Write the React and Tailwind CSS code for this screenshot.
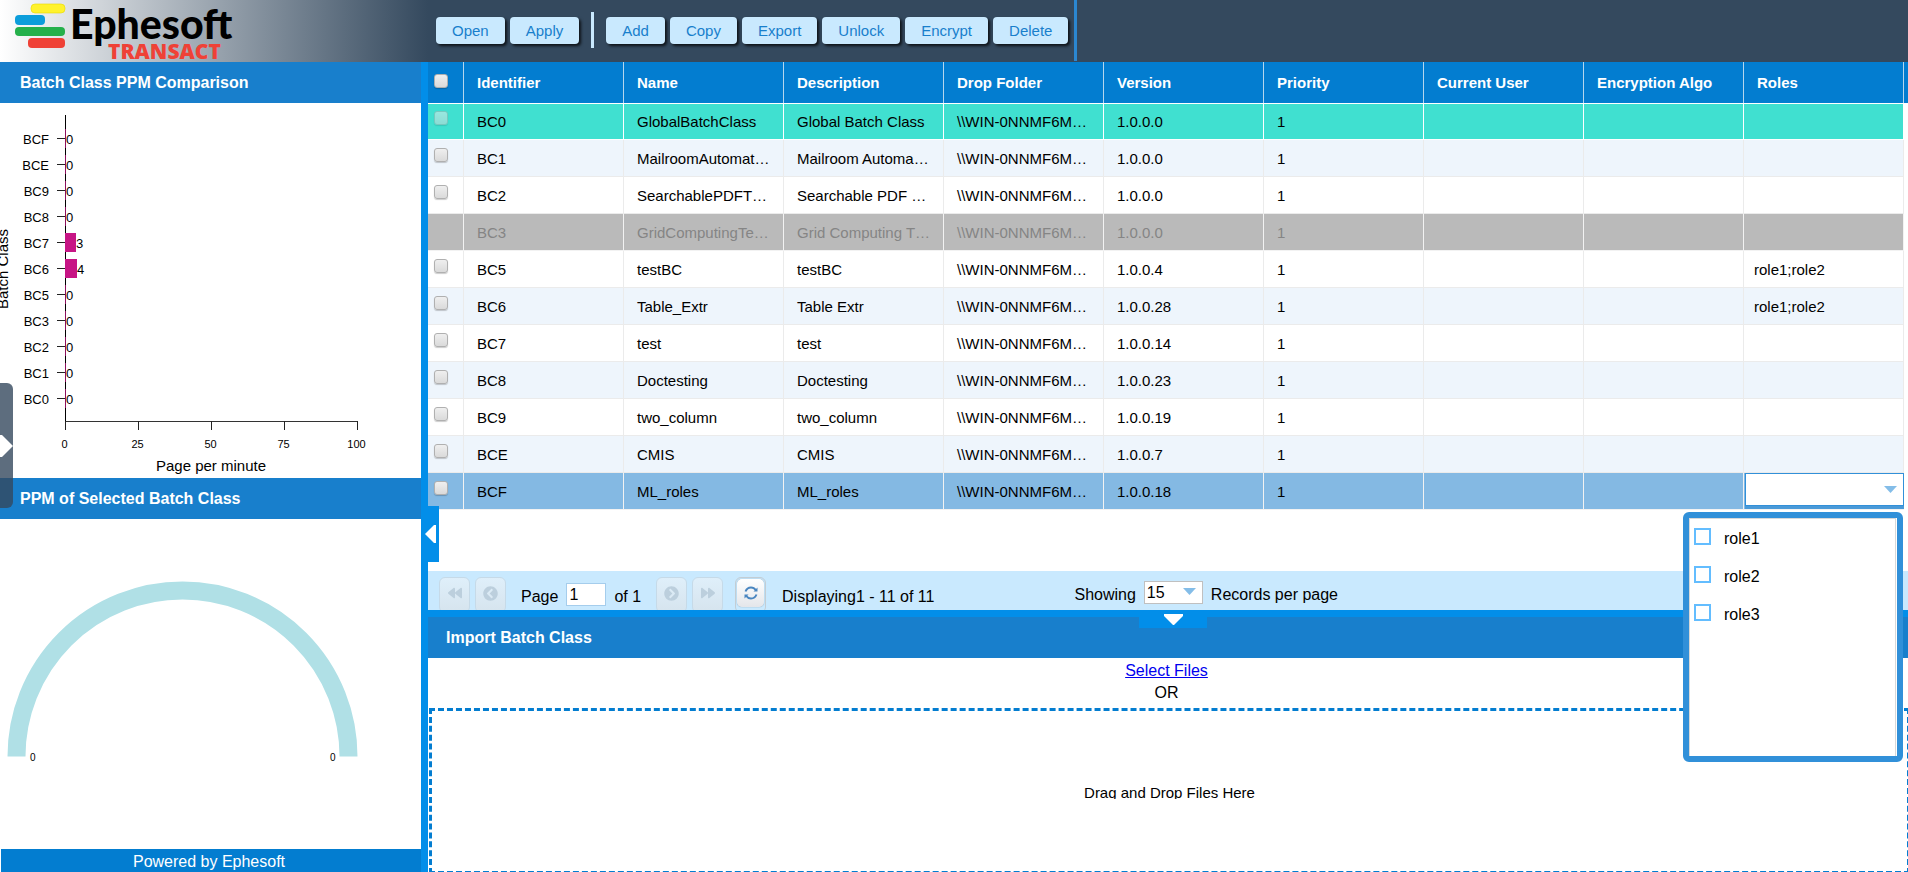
import { useState } from 'react'
import { FaBackward, FaForward, FaChevronCircleLeft, FaChevronCircleRight } from 'react-icons/fa'

const columns = [
  'Identifier',
  'Name',
  'Description',
  'Drop Folder',
  'Version',
  'Priority',
  'Current User',
  'Encryption Algo',
  'Roles'
]

const dropFolder = '\\\\WIN-0NNMF6M…'

const batchClasses = [
  { id: 'BC0', name: 'GlobalBatchClass', description: 'Global Batch Class', version: '1.0.0.0', ppm: 0, state: 'global' },
  { id: 'BC1', name: 'MailroomAutomat…', description: 'Mailroom Automa…', version: '1.0.0.0', ppm: 0 },
  { id: 'BC2', name: 'SearchablePDFT…', description: 'Searchable PDF …', version: '1.0.0.0', ppm: 0 },
  { id: 'BC3', name: 'GridComputingTe…', description: 'Grid Computing T…', version: '1.0.0.0', ppm: 0, state: 'locked' },
  { id: 'BC5', name: 'testBC', description: 'testBC', version: '1.0.0.4', ppm: 0, roles: 'role1;role2' },
  { id: 'BC6', name: 'Table_Extr', description: 'Table Extr', version: '1.0.0.28', ppm: 4, roles: 'role1;role2' },
  { id: 'BC7', name: 'test', description: 'test', version: '1.0.0.14', ppm: 3 },
  { id: 'BC8', name: 'Doctesting', description: 'Doctesting', version: '1.0.0.23', ppm: 0 },
  { id: 'BC9', name: 'two_column', description: 'two_column', version: '1.0.0.19', ppm: 0 },
  { id: 'BCE', name: 'CMIS', description: 'CMIS', version: '1.0.0.7', ppm: 0 },
  { id: 'BCF', name: 'ML_roles', description: 'ML_roles', version: '1.0.0.18', ppm: 0, state: 'selected' }
]

const Logo = () => (
  <svg width="240" height="62" viewBox="0 0 240 62" role="img" aria-label="Ephesoft Transact">
    <rect x="31" y="4" width="34" height="9" rx="4" fill="#fff22d" stroke="#e8d800" strokeWidth="0.6" />
    <rect x="15" y="15" width="30" height="10" rx="4" fill="#0c9ddb" />
    <rect x="15" y="27" width="50" height="9" rx="4" fill="#25b04b" />
    <rect x="28" y="38" width="37" height="10" rx="4" fill="#ef4136" />
    <text x="70" y="39" fontFamily="Lato, sans-serif" fontWeight="900" fontSize="41" fill="#000">Ephesoft</text>
    <text x="108" y="59" fontFamily="Open Sans, sans-serif" fontWeight="800" fontSize="21" fill="#ef4136">TRANSACT</text>
  </svg>
)

const ToolButton = ({ children }) => (
  <button className="h-[27px] px-4 rounded bg-[#c9e9fe] text-[#187fcc] text-[15px] leading-[27px] shadow-[2px_2px_3px_rgba(0,0,0,0.75)]">
    {children}
  </button>
)

const PanelTitle = ({ children }) => (
  <h2 className="h-[41px] shrink-0 bg-[#187fcc] text-white font-bold text-base leading-[41px] pl-5">{children}</h2>
)

const PpmChart = () => {
  const bars = [...batchClasses].reverse()
  const ticks = [0, 25, 50, 75, 100]
  return (
    <svg width="421" height="375" viewBox="0 0 421 375" className="block" fontFamily="Liberation Sans, Arial, sans-serif">
      <path d="M65.5 12V318" stroke="#000" />
      <path d="M65 318.5H358" stroke="#333" />
      {bars.map((b, i) => {
        const y = Math.round(36 + i * 26)
        const w = b.ppm === 0 ? 1 : b.ppm === 3 ? 11 : 12
        return (
          <g key={b.id}>
            <path d={`M57 ${y - 0.5}H65`} stroke="#222" />
            <rect x="65" y={y - 10} width={w} height="19" fill="#c71585" opacity={b.ppm ? 1 : 0.7} />
            <text x="49" y={y + 5} textAnchor="end" fontSize="13">{b.id}</text>
            <text x={b.ppm ? 65 + w : 66} y={y + 5} fontSize="13">{b.ppm}</text>
          </g>
        )
      })}
      {ticks.map((t) => {
        const x = 65.5 + Math.round(t * 2.92)
        return (
          <g key={t}>
            <path d={`M${x} 318V327`} stroke="#222" />
            <text x={x - 1} y="345" textAnchor="middle" fontSize="11">{t}</text>
          </g>
        )
      })}
      <text x="211" y="368" textAnchor="middle" fontSize="15">Page per minute</text>
      <text transform="translate(8 166) rotate(-90)" textAnchor="middle" fontSize="15">Batch Class</text>
    </svg>
  )
}

const Gauge = () => (
  <svg width="421" height="260" viewBox="0 0 421 260" className="block" fontFamily="Liberation Sans, Arial, sans-serif">
    <path d="M16.5 237.5A166 166 0 0 1 348.5 237.5" fill="none" stroke="#b0e0e6" strokeWidth="18" />
    <text x="30" y="242" fontSize="10">0</text>
    <text x="330" y="242" fontSize="10">0</text>
  </svg>
)

const rowStyle = (row, index) => {
  if (row.state === 'global') return 'bg-[#40e0d0] border-white'
  if (row.state === 'locked') return 'bg-[#bababa] text-[#858585] border-[#f2f2f2]'
  if (row.state === 'selected') return 'bg-[#84b9e3] border-[#f2f2f2]'
  return index % 2 ? 'bg-[#eef5fc] border-[#ebebeb]' : 'bg-white border-[#ebebeb]'
}

const checkboxStyle =
  'block appearance-none w-[14px] h-[14px] rounded-[3px] border border-[#b0b0b0] bg-linear-to-b from-[#efefef] to-[#dadada] shadow-[0_1px_1px_rgba(0,0,0,0.2)] disabled:opacity-50'

const RolesEditor = () => (
  <div className="relative h-[36px] ml-px -mr-px">
    <select
      aria-label="Roles"
      className="block w-full h-[33px] appearance-none bg-white border border-[#3190d9] px-2"
      defaultValue=""
    >
      <option value=""></option>
    </select>
    <div className="h-[3px] bg-[#4a9ad8]" />
    <svg className="absolute right-[7px] top-[13px] pointer-events-none" width="13" height="7" viewBox="0 0 13 7">
      <path d="M0 0H13L6.5 7Z" fill="#84bde8" />
    </svg>
    <fieldset className="absolute z-20 right-px top-[39px] w-[220px] h-[250px] rounded-md border-6 border-[#3190d9] bg-white">
      <div className="h-full mr-[1px] border-t border-x border-[#d8d8d8] pt-[9px] pl-1">
        {['role1', 'role2', 'role3'].map((role) => (
          <label key={role} className="flex items-start h-[38px] gap-[13px] text-base leading-[21px]">
            <input type="checkbox" className="appearance-none w-[17px] h-[17px] border-2 border-[#63bdff] bg-white" />
            {role}
          </label>
        ))}
      </div>
    </fieldset>
  </div>
)

const BatchTable = () => (
  <table className="w-full table-fixed border-separate border-spacing-0 text-[15px] text-black">
    <colgroup>
      <col className="w-[36px]" />
      {columns.map((c) => <col key={c} />)}
      <col className="w-[4px]" />
    </colgroup>
    <thead>
      <tr className="bg-[#037dd0] text-white text-left">
        <th className="h-[41px] p-0 pl-[6px] pt-3 align-top border-r border-[#b5d6ee]">
          <input type="checkbox" aria-label="Select all" className={checkboxStyle} />
        </th>
        {columns.map((c) => (
          <th key={c} className="h-[41px] pt-[2px] pb-0 px-[13px] font-bold border-r border-[#b5d6ee] truncate">{c}</th>
        ))}
        <td className="p-0"></td>
      </tr>
    </thead>
    <tbody>
      {batchClasses.map((row, index) => {
        const cell = `h-[37px] border-r border-b ${index === 0 ? 'border-t' : ''} ${rowStyle(row, index)}`
        const text = `${cell} pt-[2px] pb-0 pl-[13px] pr-2 truncate`
        return (
          <tr key={row.id}>
            <td className={`${cell} p-0 pl-[6px] ${index === 0 ? 'pt-[7px]' : 'pt-2'} align-top`}>
              {row.state !== 'locked' && (
                <input type="checkbox" aria-label={`Select ${row.id}`} disabled={row.state === 'global'} className={checkboxStyle} />
              )}
            </td>
            <td className={text}>{row.id}</td>
            <td className={text}>{row.name}</td>
            <td className={text}>{row.description}</td>
            <td className={text}>{dropFolder}</td>
            <td className={text}>{row.version}</td>
            <td className={text}>1</td>
            <td className={text}></td>
            <td className={text}></td>
            {row.state === 'selected' ? (
              <td className={`${cell} p-0`}><RolesEditor /></td>
            ) : (
              <td className={`${cell} pt-[2px] pb-0 px-[10px] truncate`}>{row.roles}</td>
            )}
            <td className="p-0"></td>
          </tr>
        )
      })}
    </tbody>
  </table>
)

const PagerButton = ({ label, active, children }) => (
  <button
    aria-label={label}
    disabled={!active}
    className={`w-[31px] h-[36px] shrink-0 rounded-md border p-px pb-[5px] ${
      active ? 'border-[#c3cdd4] text-[#4a86c0]' : 'border-[#c6dae8] bg-linear-to-b from-[#dfeffa] to-[#d6e4ee] text-[#bccfdd]'
    }`}
  >
    <span
      className={`flex h-full items-center justify-center rounded-[5px] ${
        active ? 'bg-linear-to-b from-white to-[#e4e6ea] shadow-[0_0_1px_rgba(0,0,0,0.5)]' : ''
      }`}
    >
      {children}
    </span>
  </button>
)

const Pager = ({ page, setPage }) => (
  <div className="flex items-start h-[39px] shrink-0 overflow-hidden bg-[#c9e9fe] pl-[11px] pt-[6px] text-base leading-[27px] text-black whitespace-nowrap">
    <div className="flex gap-[5px]">
      <PagerButton label="First page"><FaBackward className="w-[14px] h-[14px]" /></PagerButton>
      <PagerButton label="Previous page"><FaChevronCircleLeft className="w-[15px] h-[15px]" /></PagerButton>
    </div>
    <label className="flex items-start ml-[15px] gap-2 pt-[6px]">
      Page
      <input
        value={page}
        onChange={(e) => setPage(e.target.value)}
        className="w-10 h-[23px] border border-[#a5cdec] bg-white pl-[2px] leading-5"
      />
    </label>
    <span className="ml-2 pt-[6px]">of 1</span>
    <div className="flex ml-[15px] gap-[5px]">
      <PagerButton label="Next page"><FaChevronCircleRight className="w-[15px] h-[15px]" /></PagerButton>
      <PagerButton label="Last page"><FaForward className="w-[14px] h-[14px]" /></PagerButton>
    </div>
    <div className="flex ml-3">
      <PagerButton label="Refresh" active>
        <svg width="14" height="14" viewBox="0 0 14 14" fill="none" stroke="currentColor" strokeWidth="2">
          <path d="M1.5 5.500C2.500 3 4.500 1.500 7 1.500C9 1.500 10.500 2.200 11.700 4" />
          <path d="M12.500 8.500C11.500 11 9.500 12.500 7 12.500C5 12.500 3.500 11.800 2.300 10" />
          <path d="M13.500 1.500V5.500H9.500ZM0.500 12.500V8.500H4.500Z" fill="currentColor" stroke="none" />
        </svg>
      </PagerButton>
    </div>
    <span className="ml-4 pt-[6px]">Displaying1 - 11 of 11</span>
    <label htmlFor="page-size" className="ml-[140px] pt-1">Showing</label>
    <span className="relative ml-2 mt-1">
      <select id="page-size" defaultValue="15" className="block w-[59px] h-[23px] appearance-none border border-[#c0c0c0] bg-white pl-[2px] leading-5">
        <option>15</option>
        <option>25</option>
        <option>50</option>
      </select>
      <svg className="absolute right-[7px] top-[7px] pointer-events-none" width="13" height="7" viewBox="0 0 13 7">
        <path d="M0 0H13L6.5 7Z" fill="#84bde8" />
      </svg>
    </span>
    <span className="ml-2 pt-1">Records per page</span>
  </div>
)

const ImportPanel = () => (
  <section className="shrink-0 overflow-hidden bg-white">
    <h2 className="h-[41px] bg-[#187fcc] text-white font-bold text-base leading-[41px] pl-[18px]">Import Batch Class</h2>
    <div className="h-[50px] pt-[2px] pr-[3px] text-center text-base leading-[22px] text-black">
      <a href="#select" className="text-[#0000ee] underline">Select Files</a>
      <p>OR</p>
    </div>
    <div className="h-[166px] -mb-[2px] ml-px -mr-[2px] border-3 border-dashed border-[#037dd0] pt-[73px] text-center">
      <p className="h-[15px] overflow-hidden text-[15px] leading-[18px] text-black">Drag and Drop Files Here</p>
    </div>
  </section>
)

const App = () => {
  const [page, setPage] = useState('1')

  return (
    <div className="relative flex flex-col h-screen overflow-hidden bg-white font-['Liberation_Sans',Arial,sans-serif]">
      <header className="flex h-[62px] shrink-0 bg-[#34495e]">
        <div className="w-[428px] shrink-0 bg-linear-to-r/srgb from-white to-[#34495e]">
          <Logo />
        </div>
        <div className="flex items-start gap-[5px] pl-2 pt-[17px]">
          <ToolButton>Open</ToolButton>
          <ToolButton>Apply</ToolButton>
        </div>
        <div className="w-[3px] h-9 mt-3 mx-3 bg-[#c9e9fe]" />
        <div className="flex items-start gap-[5px] pt-[17px]">
          <ToolButton>Add</ToolButton>
          <ToolButton>Copy</ToolButton>
          <ToolButton>Export</ToolButton>
          <ToolButton>Unlock</ToolButton>
          <ToolButton>Encrypt</ToolButton>
          <ToolButton>Delete</ToolButton>
        </div>
        <div className="w-[3px] h-[61px] ml-[6px] bg-[#2b87d1]" />
      </header>

      <div className="flex flex-1 min-h-0">
        <aside className="relative flex flex-col w-[421px] shrink-0">
          <PanelTitle>Batch Class PPM Comparison</PanelTitle>
          <PpmChart />
          <PanelTitle>PPM of Selected Batch Class</PanelTitle>
          <div className="flex-1 min-h-0">
            <Gauge />
          </div>
          <footer className="h-[23px] shrink-0 ml-px pr-1 bg-[#037dd0] text-white text-base leading-[25px] text-center">
            Powered by Ephesoft
          </footer>
          <button aria-label="Open menu" className="absolute left-0 top-[321px] w-[13px] h-[125px] rounded-r-md bg-[#34495e]/80">
            <svg width="13" height="24" viewBox="0 0 13 24" className="block">
              <path d="M0 1H2L13 12L2 23H0Z" fill="#fff" />
            </svg>
          </button>
        </aside>

        <div className="relative w-[7px] shrink-0 bg-[#028ee9]">
          <button aria-label="Collapse left panel" className="absolute z-10 left-0 top-[444px] w-[18px] h-[56px] bg-[#028ee9] pl-1">
            <svg width="11" height="18" viewBox="0 0 11 18" className="block">
              <path d="M11 0V18H9L0 9L9 0Z" fill="#fff" />
            </svg>
          </button>
        </div>

        <main className="flex flex-col flex-1 min-w-0">
          <div className="flex-1 min-h-0">
            <BatchTable />
          </div>
          <Pager page={page} setPage={setPage} />
          <div className="relative h-[7px] shrink-0 bg-[#028ee9]">
            <button aria-label="Collapse import panel" className="absolute z-10 left-[711px] top-0 w-[68px] h-[18px] bg-[#028ee9]">
              <svg width="19" height="11" viewBox="0 0 19 11" className="block mx-auto">
                <path d="M0 0H19V2L10 11H9L0 2Z" fill="#fff" />
              </svg>
            </button>
          </div>
          <ImportPanel />
        </main>
      </div>
    </div>
  )
}

export default App
